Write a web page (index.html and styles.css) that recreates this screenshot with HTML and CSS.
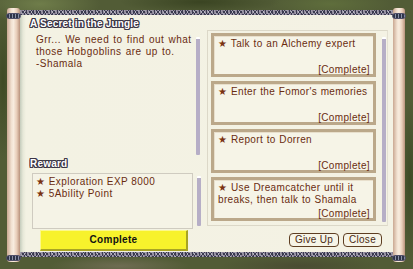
FILE: index.html
```html
<!DOCTYPE html>
<html>
<head>
<meta charset="utf-8">
<link rel="stylesheet" href="styles.css">
</head>
<body>
<div class="stage">
  <div class="roll roll-left"><div class="cap cap-top"></div><div class="cap cap-bottom"></div></div>
  <div class="panel">
    <div class="band"></div>
    <div class="body">
      <div class="left">
        <div class="title">A Secret in the Jungle</div>
        <div class="desc">
          <div class="desc-text">Grr... We need to find out what<br>those Hobgoblins are up to.<br>-Shamala</div>
          <div class="sbar sbar-desc"></div>
        </div>
        <div class="label">Reward</div>
        <div class="reward-row">
          <div class="reward-box">
            <div class="line"><span class="star">★</span> Exploration EXP 8000</div>
            <div class="line"><span class="star">★</span> 5Ability Point</div>
          </div>
          <div class="sbar sbar-reward"></div>
        </div>
        <div class="complete-btn">Complete</div>
      </div>
      <div class="right">
        <div class="objectives">
          <div class="cards">
            <div class="card"><div class="task"><span class="star">★</span> Talk to an Alchemy expert</div><div class="status">[Complete]</div></div>
            <div class="card"><div class="task"><span class="star">★</span> Enter the Fomor's memories</div><div class="status">[Complete]</div></div>
            <div class="card"><div class="task"><span class="star">★</span> Report to Dorren</div><div class="status">[Complete]</div></div>
            <div class="card"><div class="task"><span class="star">★</span> Use Dreamcatcher until it<br>breaks, then talk to Shamala</div><div class="status">[Complete]</div></div>
          </div>
          <div class="sbar sbar-obj"></div>
        </div>
        <div class="buttons">
          <div class="btn btn-giveup">Give Up</div>
          <div class="btn btn-close">Close</div>
        </div>
      </div>
    </div>
    <div class="band band-bottom"></div>
  </div>
  <div class="roll roll-right"><div class="cap cap-top"></div><div class="cap cap-bottom"></div></div>
</div>
</body>
</html>
```

FILE: styles.css
```css
* { box-sizing: border-box; }
html, body { margin: 0; padding: 0; }
body {
  width: 413px;
  height: 269px;
  overflow: hidden;
  font-family: "Liberation Sans", "DejaVu Sans", sans-serif;
  background:
    radial-gradient(ellipse 60px 20px at 40px 4px, #6f7d4a, transparent),
    radial-gradient(ellipse 80px 12px at 200px 2px, #3a4422, transparent),
    radial-gradient(ellipse 60px 14px at 330px 4px, #5f6e3c, transparent),
    radial-gradient(ellipse 70px 10px at 120px 266px, #6e6c52, transparent),
    radial-gradient(ellipse 80px 10px at 300px 266px, #4a4c32, transparent),
    radial-gradient(ellipse 10px 80px at 3px 80px, #3e4a24, transparent),
    radial-gradient(ellipse 10px 80px at 410px 180px, #3d4a26, transparent),
    #525c36;
}
.stage {
  display: flex;
  height: 269px;
  padding: 8px 8px 7px 7px;
}
.roll {
  position: relative;
  height: 254px;
  background: linear-gradient(90deg, #caa892 0%, #f2e2d2 35%, #f8ecde 50%, #e8cdb8 75%, #b8927c 100%);
  border-radius: 3px;
}
.roll-left { width: 13px; }
.roll-right { width: 12px; }
.cap {
  position: absolute;
  left: -1px;
  right: -1px;
  height: 6px;
  border-radius: 3px;
  background: repeating-linear-gradient(90deg, #2e3448 0 2px, #8a90a8 2px 3px);
  border: 1px solid #50506a;
}
.cap-top { top: 5px; }
.cap-bottom { bottom: 1px; }
.panel {
  flex: 1;
  margin-top: 2px;
  height: 247px;
  display: flex;
  flex-direction: column;
  background: linear-gradient(90deg, #c4ccbc 0px, #e6e8d8 3px, #f3f2e3 6px, #f4f2e4 100%);
}
.band {
  height: 5px;
  background:
    repeating-linear-gradient(60deg, transparent 0 2px, rgba(200,200,210,0.7) 2px 3px),
    repeating-linear-gradient(-60deg, #3a3a50 0 2px, #8c8296 2px 3px);
}
.body {
  flex: 1;
  display: flex;
  padding-left: 6px;
}
.left {
  width: 177px;
  display: flex;
  flex-direction: column;
}
.title, .label {
  color: #fff;
  font-weight: bold;
  font-size: 10px;
  line-height: 12px;
  padding-left: 4px;
  letter-spacing: 0.2px;
  text-shadow: 1px 0 #3a3444, -1px 0 #3a3444, 0 1px #3a3444, 0 -1px #3a3444, 1px 1px #3a3444, -1px -1px #3a3444, 1px -1px #3a3444, -1px 1px #3a3444;
}
.title { margin-top: 3px; }
.desc {
  display: flex;
  height: 128px;
  margin-top: 1px;
}
.desc-text {
  flex: 1;
  padding: 3px 0 0 10px;
  color: #6a2c10;
  font-size: 10px;
  line-height: 12px;
  letter-spacing: 0.45px;
  word-spacing: 1px;
}
.sbar {
  width: 4px;
  background: linear-gradient(180deg, #ffffff 0 2px, #b6aec6 2px);
  border-radius: 1px;
}
.sbar-desc { margin: 6px 3px 4px 0; }
.label { margin-top: -1px; }
.reward-row {
  display: flex;
  margin-top: 3px;
  height: 56px;
}
.reward-box {
  width: 161px;
  margin-left: 6px;
  border: 1px solid #cfcbc0;
  background: #f5f3e6;
  padding: 2px 0 0 3px;
  color: #6a2c10;
  font-size: 10px;
  line-height: 12px;
  letter-spacing: 0.45px;
}
.sbar-reward { margin: 3px 0 3px 4px; }
.star { color: #7a3212; font-size: 10px; }
.complete-btn {
  margin: 1px 0 0 14px;
  width: 148px;
  height: 21px;
  background: #f7f22c;
  border-top: 1px solid #fcf88a;
  border-left: 1px solid #fcf88a;
  border-right: 2px solid #a8a424;
  border-bottom: 2px solid #a8a424;
  text-align: center;
  font-weight: bold;
  font-size: 10px;
  line-height: 18px;
  color: #111;
  letter-spacing: 0.3px;
}
.right {
  width: 181px;
  margin-left: 4px;
  display: flex;
  flex-direction: column;
}
.objectives {
  margin-top: 15px;
  height: 196px;
  border: 1px solid #dcd8c8;
  border-right: 1px solid #e4e0d2;
  display: flex;
  padding: 2px 0 0 3px;
}
.cards {
  width: 165px;
  display: flex;
  flex-direction: column;
  gap: 4px;
}
.card {
  height: 44px;
  border: 3px solid #bba88a;
  box-shadow: inset 1px 1px 0 #e8dfcc;
  background: #f6f4e7;
  padding: 2px 3px 0 4px;
  display: flex;
  flex-direction: column;
  justify-content: space-between;
  color: #6a2c10;
  font-size: 10px;
  letter-spacing: 0.35px;
}
.task { line-height: 12px; white-space: nowrap; margin-right: -3px; word-spacing: 0.5px; }
.status { text-align: right; line-height: 10px; margin-bottom: -1px; }
.sbar-obj { margin: 4px 0 3px 6px; }
.buttons {
  display: flex;
  justify-content: flex-end;
  gap: 4px;
  margin-top: 7px;
  padding-right: 6px;
}
.btn {
  height: 14px;
  border: 1px solid #5e3e22;
  border-radius: 4px;
  background: #f6f4e7;
  color: #4a2a12;
  font-size: 10px;
  line-height: 12px;
  text-align: center;
  letter-spacing: 0.3px;
}
.btn-giveup { width: 50px; }
.btn-close { width: 39px; }
.band-bottom { margin-top: 0; }
```
